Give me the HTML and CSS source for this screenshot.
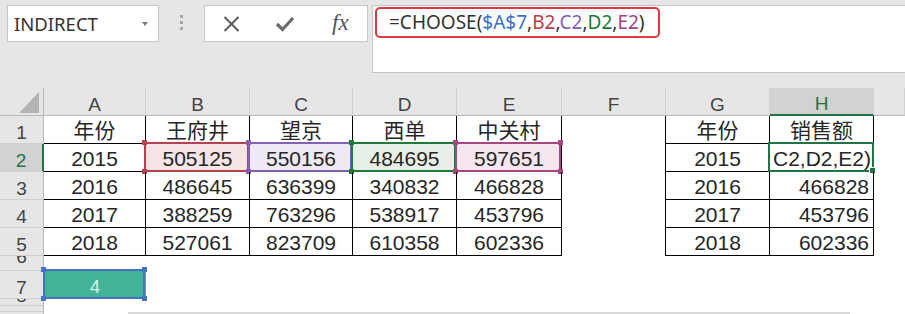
FILE: index.html
```html
<!DOCTYPE html>
<html>
<head>
  <meta charset="utf-8" />
  <title>CHOOSE</title>
  <link rel="stylesheet" href="styles.css">
</head>
<body>

<!-- NAME BOX + FORMULA BAR -->
<div class="topbar">
  <div class="namebox"><span>INDIRECT</span><span class="arrow"></span></div>
  <div class="grip"><i></i><i></i><i></i></div>
  <div class="fxbox">
    <span class="tool">
      <svg width="17" height="16" viewBox="0 0 17 16"><path d="M1.5 1L15.5 15M15.5 1L1.5 15" stroke="#5a5a5a" stroke-width="2" fill="none"/></svg>
    </span>
    <span class="tool">
      <svg width="20" height="17" viewBox="0 0 20 17"><path d="M2 9l5.5 5.5L18 3" stroke="#6b6b6b" stroke-width="3.2" fill="none"/></svg>
    </span>
    <span class="tool fx">fx</span>
  </div>
  <div class="formula">
    <span class="hl-box">=CHOOSE(<span class="f-blue">$A$7</span>,<span class="f-red">B2</span>,<span class="f-purple">C2</span>,<span class="f-green">D2</span>,<span class="f-pink">E2</span>)</span>
  </div>
</div>

<!-- SHEET -->
<div class="sheet">
  <div class="corner"><span></span></div>
  <div class="ch">A</div>
  <div class="ch">B</div>
  <div class="ch">C</div>
  <div class="ch">D</div>
  <div class="ch">E</div>
  <div class="ch">F</div>
  <div class="ch">G</div>
  <div class="ch ch-sel">H</div>
  <div class="ch"></div>

  <div class="rh"><span>1</span></div>
  <div class="c d">年份</div>
  <div class="c d">王府井</div>
  <div class="c d">望京</div>
  <div class="c d">西单</div>
  <div class="c d">中关村</div>
  <div class="c lb"></div>
  <div class="c d">年份</div>
  <div class="c d">销售额</div>

  <div class="rh rh-sel"><span>2</span></div>
  <div class="c d">2015</div>
  <div class="c d fill-red">505125<span class="ref ref-red"></span></div>
  <div class="c d fill-purple">550156<span class="ref ref-purple"></span></div>
  <div class="c d fill-green">484695<span class="ref ref-green"></span></div>
  <div class="c d fill-pink">597651<span class="ref ref-pink"></span></div>
  <div class="c lb"></div>
  <div class="c d">2015</div>
  <div class="c d edit">C2,D2,E2)<span class="active"><span class="handle"></span></span></div>

  <div class="rh"><span>3</span></div>
  <div class="c d">2016</div>
  <div class="c d">486645</div>
  <div class="c d">636399</div>
  <div class="c d">340832</div>
  <div class="c d">466828</div>
  <div class="c lb"></div>
  <div class="c d">2016</div>
  <div class="c d num">466828</div>

  <div class="rh"><span>4</span></div>
  <div class="c d">2017</div>
  <div class="c d">388259</div>
  <div class="c d">763296</div>
  <div class="c d">538917</div>
  <div class="c d">453796</div>
  <div class="c lb"></div>
  <div class="c d">2017</div>
  <div class="c d num">453796</div>

  <div class="rh"><span>5</span></div>
  <div class="c d">2018</div>
  <div class="c d">527061</div>
  <div class="c d">823709</div>
  <div class="c d">610358</div>
  <div class="c d">602336</div>
  <div class="c lb"></div>
  <div class="c d">2018</div>
  <div class="c d num">602336</div>

  <div class="rh short6"><span>6</span></div>

  <div class="rh"><span>7</span></div>
  <div class="c index">4<span class="ref ref-blue"></span></div>

  <div class="rh short8"><span>8</span></div>

  <div class="rh"></div>
</div>

<!-- horizontal scrollbar strip -->
<div class="bottom">
  <div class="bottom-rh"></div>
  <div class="thumb"></div>
</div>

</body>
</html>
```

FILE: styles.css
```css
html, body {
  margin: 0;
  padding: 0;
}
*, *::before, *::after {
  box-sizing: border-box;
}
body {
  width: 905px;
  height: 314px;
  overflow: hidden;
  background: #e6e6e6;
  font-family: "Liberation Sans", "Noto Sans CJK SC", sans-serif;
  color: #262626;
}

/* Top bar */
.topbar {
  height: 88px;
  display: flex;
  align-items: flex-start;
  padding: 5px 0 0 7px;
}
.namebox {
  width: 152px;
  height: 37px;
  background: #fff;
  border: 1px solid #c6c6c6;
  display: flex;
  align-items: center;
  justify-content: space-between;
  padding: 0 10px 0 6px;
  font-family: "Noto Sans", sans-serif;
  font-size: 18.5px;
  color: #333;
}
.arrow {
  width: 0;
  height: 0;
  border-left: 3.5px solid transparent;
  border-right: 3.5px solid transparent;
  border-top: 4px solid #7a7a7a;
}
.grip {
  width: 45px;
  display: flex;
  flex-direction: column;
  align-items: center;
  gap: 3px;
  padding-top: 10px;
}
.grip i {
  width: 3px;
  height: 3px;
  background: #a8a8a8;
}
.fxbox {
  width: 164px;
  height: 37px;
  background: #fff;
  border: 1px solid #c6c6c6;
  display: flex;
}
.tool {
  flex: 1;
  display: flex;
  align-items: center;
  justify-content: center;
}
.fx {
  font-family: "Liberation Serif", serif;
  font-style: italic;
  font-size: 23px;
  color: #555;
  padding: 0 0 2px 2px;
}
.formula {
  flex: 1;
  margin-left: 4px;
  height: 68px;
  background: #fff;
  border: 1px solid #c6c6c6;
  border-right: none;
  padding: 1px 0 0 2px;
}
.hl-box {
  display: inline-block;
  height: 31px;
  border: 2px solid #e0393e;
  border-radius: 5px;
  padding: 0 13px 0 12px;
  font-family: "Noto Sans", sans-serif;
  font-size: 19px;
  line-height: 27px;
  color: #333;
}
.f-blue { color: #3b6fc6; }
.f-red { color: #bd3a48; }
.f-purple { color: #8160b4; }
.f-green { color: #1d7b36; }
.f-pink { color: #a54280; }

/* Sheet grid */
.sheet {
  height: 224px;
  background: #fff;
  display: grid;
  grid-template-columns: 44px 102px 104px 103px 104px 105px 104px 104px 104px 1fr;
  grid-template-rows: 28px 28px 28px 28px 28px 28px 15px 28px 7px 1fr;
}
.corner {
  background: #e6e6e6;
  border-right: 1px solid #b8b8b8;
  border-bottom: 1px solid #b8b8b8;
  display: flex;
  justify-content: flex-end;
  align-items: flex-end;
  padding: 0 4px 2px 0;
}
.corner span {
  width: 20px;
  height: 21px;
  background: #b4b4b4;
  clip-path: polygon(100% 0, 100% 100%, 0 100%);
}
.ch {
  background: #e6e6e6;
  border-right: 1px solid #d0d0d0;
  border-bottom: 1px solid #b8b8b8;
  display: flex;
  justify-content: center;
  align-items: flex-end;
  font-size: 19px;
  line-height: 21px;
  color: #444;
}
.ch-sel {
  background: #d2d2d2;
  color: #217346;
  border-bottom: 2px solid #217346;
}
.rh {
  grid-column: 1;
  background: #e6e6e6;
  border-right: 1px solid #b8b8b8;
  border-bottom: 1px solid #d0d0d0;
  display: flex;
  justify-content: center;
  align-items: flex-end;
  overflow: hidden;
  font-size: 19px;
  line-height: 21px;
  color: #444;
}
.rh-sel {
  background: #d2d2d2;
  color: #217346;
  border-right: 2px solid #217346;
}
/* squeezed rows: only part of the number shows */
.short6, .short8 {
  align-items: flex-start;
}
.short6 span { margin-top: -10px; }
.short8 span { margin-top: -14px; }

/* Cells */
.c {
  position: relative;
  display: flex;
  justify-content: center;
  align-items: flex-end;
  font-size: 21px;
  line-height: 24px;
  white-space: nowrap;
}
.d {
  border-right: 1px solid #000;
  border-bottom: 1px solid #000;
}
.lb {
  border-right: 1px solid #000;
}
.num {
  justify-content: flex-end;
  padding-right: 4px;
}
.edit {
  justify-content: flex-start;
  padding-left: 3px;
}
.index {
  background: #43b398;
  color: #d6f3ea;
  font-size: 18px;
}

.fill-red { background: #f6e5e7; }
.fill-purple { background: #eee9f5; }
.fill-green { background: #e6f0e8; }
.fill-pink { background: #f5e6ef; }

/* Reference highlight boxes with corner squares */
.ref {
  position: absolute;
  top: -4px;
  left: -4px;
  right: -2px;
  bottom: -3px;
  outline: 2px solid var(--hc);
  outline-offset: -4px;
  background:
    linear-gradient(var(--hc), var(--hc)) left top / 5px 5px no-repeat,
    linear-gradient(var(--hc), var(--hc)) right top / 5px 5px no-repeat,
    linear-gradient(var(--hc), var(--hc)) left bottom / 5px 5px no-repeat,
    linear-gradient(var(--hc), var(--hc)) right bottom / 5px 5px no-repeat;
}
.ref-red { --hc: #b8404f; }
.ref-purple { --hc: #8462b3; }
.ref-green { --hc: #1e7a36; }
.ref-pink { --hc: #a8477f; }
.ref-blue {
  --hc: #4472c4;
  left: -3px;
  right: -1px;
  bottom: -2px;
}

/* Active cell */
.active {
  position: absolute;
  top: -2px;
  left: -2px;
  right: -1px;
  bottom: -1px;
  border: 2px solid #217346;
}
.handle {
  position: absolute;
  right: -4px;
  bottom: -4px;
  width: 7px;
  height: 7px;
  background: #217346;
  border: 1px solid #fff;
}

/* Bottom strip */
.bottom {
  height: 2px;
  display: flex;
  background: #fff;
}
.bottom-rh {
  width: 44px;
  background: #e6e6e6;
  border-right: 1px solid #b8b8b8;
}
.thumb {
  margin-left: 84px;
  width: 722px;
  background: #d9d9d9;
}
```
